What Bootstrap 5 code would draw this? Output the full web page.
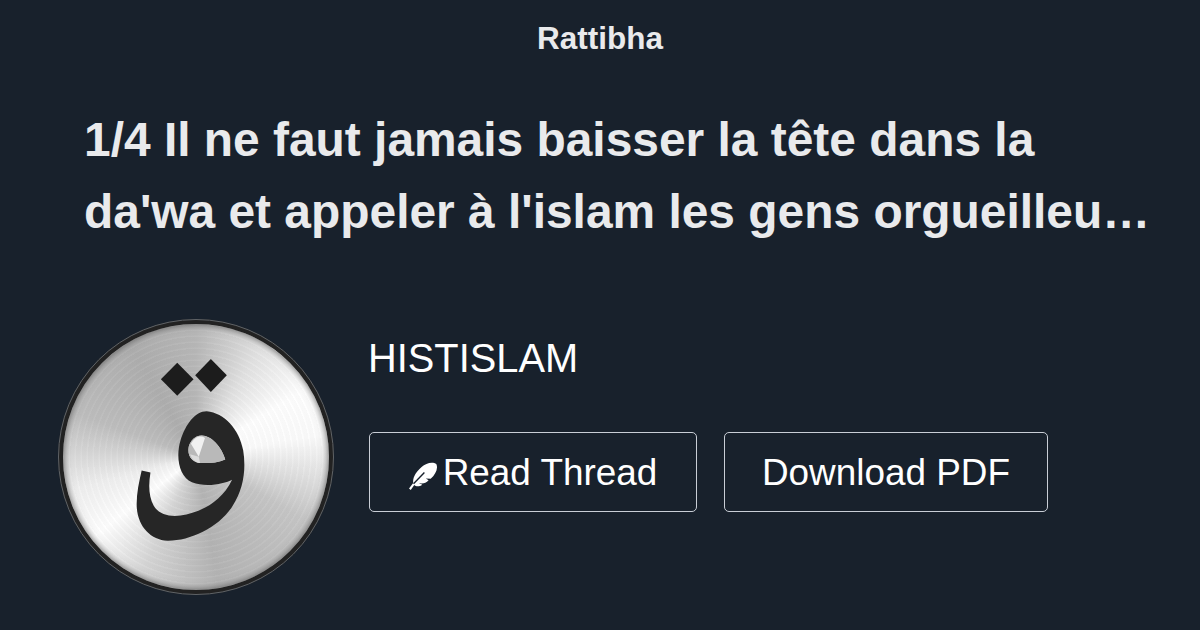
<!DOCTYPE html>
<html lang="en">

<head>
    <meta charset="UTF-8" />
    <meta name="viewport" content="width=device-width, initial-scale=1.0" />
    <title>Rattibha</title>
    <link href="https://cdn.jsdelivr.net/npm/bootstrap@5.3.0/dist/css/bootstrap.min.css" rel="stylesheet" />
    <style>
        body {
            background: #18212c;
            font-family: "Liberation Sans", Arial, sans-serif;
            height: 630px;
            overflow: hidden;
        }

        .site-name {
            color: #e9eaec;
            font-size: 31.5px;
            font-weight: 700;
            line-height: 36px;
            padding-top: 20px;
        }

        .thread-title {
            color: #e9eaec;
            font-size: 47.9px;
            font-weight: 700;
            line-height: 72px;
            margin: 48px 44px 0 84px;
            display: -webkit-box;
            -webkit-box-orient: vertical;
            -webkit-line-clamp: 2;
            overflow: hidden;
        }

        .author-row {
            margin: 71px 0 0 58px;
            gap: 34px;
        }

        .avatar-disc {
            width: 276px;
            height: 276px;
            flex: none;
            border-radius: 50%;
            background:
                repeating-radial-gradient(circle at 50% 50%, rgba(255, 255, 255, .035) 0 1px, rgba(90, 90, 90, .03) 2px 6px),
                conic-gradient(from 0deg at 50% 50%, #b8b8b8 0deg, #e2e2e2 30deg, #fff 58deg, #fcfcfc 80deg, #c6c6c6 120deg, #b4b4b4 170deg, #d6d6d6 205deg, #fff 232deg, #f0f0f0 255deg, #bebebe 290deg, #aeaeae 330deg, #b8b8b8 360deg);
            border: 5px solid #222;
            outline: 1px solid #5f6367;
            outline-offset: -1px;
            box-shadow: inset 0 0 7px #555;
        }

        .avatar-disc svg {
            display: block;
            width: 100%;
            height: 100%;
        }

        .author-name {
            color: #fff;
            font-size: 39.8px;
            line-height: 44px;
            margin: 17px 0 52px;
        }

        .thread-btn {
            color: #fff;
            font-size: 36.9px;
            line-height: 42px;
            height: 80px;
            border: 1px solid #c9ced6;
            border-radius: 5px;
            background: #18212c;
            padding: 2px 0 0;
            display: flex;
            align-items: center;
            justify-content: center;
        }

        .btn-row {
            gap: 27px;
        }

        .btn-read {
            width: 328px;
            margin-left: 1px;
        }

        .btn-pdf {
            width: 324px;
        }

        .feather-icon {
            width: 28px;
            height: 28px;
            margin-right: 6px;
            margin-top: 6px;
        }
    </style>
</head>

<body>
    <div class="site-name text-center">Rattibha</div>
    <h1 class="thread-title">1/4 Il ne faut jamais baisser la tête dans la da'wa et appeler à l'islam les gens orgueilleux et arrogants</h1>

    <div class="author-row d-flex">
        <div class="avatar-disc">
            <!-- same coords as a 3x crop of the avatar, minus the border -->
            <svg viewBox="60 63 815 815">
                <path fill="#1c1c1c" d="M410 182 L460 232 L410 283 L360 232 Z" />
                <path fill="#1c1c1c" d="M513 170 L562 220 L513 271 L465 220 Z" />
                <path fill="#262626" fill-rule="evenodd" d="M500 330 C555 335 600 385 612 450 C622 510 612 570 580 620 C540 685 450 728 380 727 C330 725 290 685 286 625 C284 590 292 550 301 512 L328 518 C322 555 322 590 338 620 C352 645 385 655 420 650 C480 640 545 610 578 540 C555 552 500 565 455 548 C415 530 405 470 420 420 C435 370 465 330 500 330 Z M445 440 C440 465 455 487 480 489 C505 490 535 488 557 478 C545 440 515 405 485 405 C465 405 450 420 445 440 Z" />
                <path fill="#b9b9b9" d="M445 440 C440 465 455 487 480 489 C505 490 535 488 557 478 C545 440 515 405 485 405 C465 405 450 420 445 440 Z" />
                <path fill="#fff" opacity=".8" d="M476 470 L452 430 C462 410 480 402 495 412 Z" />
                <path fill="#fff" opacity=".5" d="M476 470 L480 489 C470 489 455 480 449 462 Z" />
            </svg>
        </div>
        <div>
            <div class="author-name">HISTISLAM</div>
            <div class="d-flex btn-row">
                <a class="btn thread-btn btn-read" href="#">
                    <svg class="feather-icon" viewBox="0 0 80 80">
                        <path fill="#fff" d="M0 76 L12 60 C10 44 20 28 36 14 C48 3 68 -2 78 6 C84 18 76 36 62 48 L48 47 L56 52 C48 61 38 63 28 60 L38 65 C30 71 20 71 15 66 L5 80 Z" />
                        <path fill="none" stroke="#18212c" stroke-width="4" d="M13 62 L44 30" />
                    </svg>Read Thread</a>
                <a class="btn thread-btn btn-pdf" href="#">Download PDF</a>
            </div>
        </div>
    </div>
</body>

</html>
